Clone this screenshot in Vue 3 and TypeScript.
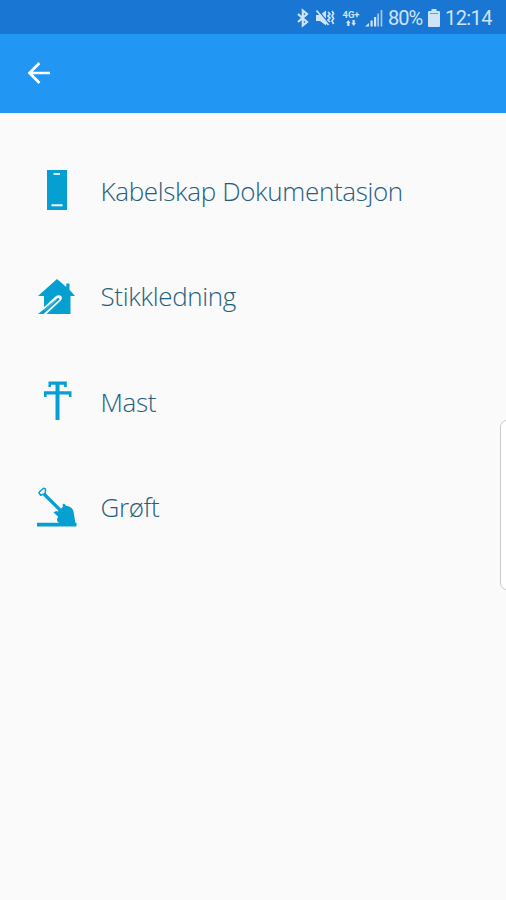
<script setup lang="ts">
type IconName = 'cabinet' | 'house' | 'mast' | 'shovel'

interface MenuItem {
  label: string
  icon: IconName
}

const items: MenuItem[] = [
  { label: 'Kabelskap Dokumentasjon', icon: 'cabinet' },
  { label: 'Stikkledning', icon: 'house' },
  { label: 'Mast', icon: 'mast' },
  { label: 'Grøft', icon: 'shovel' },
]
</script>

<template>
  <div class="screen">
    <div class="status">
      <svg class="bluetooth" width="14" height="20" viewBox="0 0 14 20">
        <path d="M2 6 11 14 6.800 17.500V2.500L11 6 2 14" fill="none" stroke="currentColor" stroke-width="2.200" />
      </svg>
      <svg class="mute" width="20" height="20" viewBox="0 0 20 20">
        <path d="M1 7h4l6-4.500v15L5 13H1z" fill="currentColor" />
        <path d="M2.500 1.500 14 15.500" stroke="#1976d2" stroke-width="1.300" />
        <path d="M1.500 2.500 13.500 17" stroke="currentColor" stroke-width="1.800" />
        <path d="M13 4l2 2-2 2 2 2-2 2 2 2M17 3l1.600 2.500L17 8l1.600 2.500L17 13l1.600 3" fill="none" stroke="currentColor" stroke-width="1.700" />
      </svg>
      <div class="network">
        <span>4G+</span>
        <svg width="10" height="6" viewBox="0 0 10 6">
          <path d="M0 3 2.300 0 4.600 3H3.500v3H1.200V3zM5.400 3h1.100V0h2.300v3h1.200L7.700 6z" fill="currentColor" />
        </svg>
      </div>
      <svg class="signal" width="18" height="18" viewBox="0 0 18 18">
        <path d="M0 17.500 4 14v3.500zM5.500 11.500h2.200v6H5.500zM9 8h2.200v9.500H9z" fill="currentColor" />
        <path d="M12.300 4.500h1.700v13h-1.700zM15.600 1h1.700v16.500h-1.700z" fill="currentColor" opacity=".75" />
      </svg>
      <span class="percent">80%</span>
      <svg class="battery" width="12" height="18" viewBox="0 0 12 18">
        <path d="M3.500 0h5v2H11q1 0 1 1v14q0 1-1 1H1q-1 0-1-1V3q0-1 1-1h2.500z" fill="currentColor" />
        <path d="M2 4.500h8" stroke="#5c9fe2" stroke-width="1" />
      </svg>
      <span class="clock">12:14</span>
    </div>

    <header class="bar">
      <svg class="back" width="24" height="24" viewBox="0 0 24 24">
        <path d="M23 12H3M12.500 2 2.500 12l10 10" fill="none" stroke="#fff" stroke-width="2.700" />
      </svg>
    </header>

    <main class="list">
      <div v-for="item in items" :key="item.label" class="row">
        <svg class="icon" width="44" height="44" viewBox="0 0 44 44">
          <template v-if="item.icon === 'cabinet'">
            <path d="M12 2h20v40H12z" fill="currentColor" />
            <path d="M18.500 6h6.500" stroke="#d7f1f9" stroke-width="2" />
            <path d="M16.500 37.300h11" stroke="#fff" stroke-width="2" />
          </template>
          <template v-else-if="item.icon === 'house'">
            <path d="M22 5 31.300 13V9.500h3.200v6.300L40 22h-4.500v18H9V22H3z" fill="currentColor" />
            <path d="M0 41.500 20.500 22.500q2.500-2.300 5.500-.7 2 2.500-.5 4.900L11 40.500V43H0z" fill="#fafafa" />
            <path d="M3 40 22.500 24.200q2-.7 2 1.200L8.500 40z" fill="currentColor" />
            <path d="M9 36.500 21.500 26" stroke="#75c9e5" stroke-width=".700" />
          </template>
          <path
            v-else-if="item.icon === 'mast'"
            d="M13.500 2.500h18.300v5.500h-2.700V5.800h-4.600v6.500h12V18h-2.600v-2.500h-9.400V41h-4V15.500h-8.900V18H9v-5.700h11.500V5.800H16V8h-2.500z"
            fill="currentColor"
          />
          <template v-else>
            <path d="M2 37.800h39.500v3.700H2z" fill="currentColor" />
            <path d="M9 9 25 25" stroke="currentColor" stroke-width="3.200" />
            <path d="M3.800 7.500 8.500 3.200l2 .7-.3 4.500-4.500 1.800z" fill="#fafafa" stroke="currentColor" stroke-width="1.500" stroke-linejoin="round" />
            <path d="M18.500 27.500l2.500-1.500 2 .5 5-5-.5-2 1.500-1 2.500 2.500q5.500.3 7 5.500l2 12H25.500q-4-1.500-3.500-4l1-3z" fill="currentColor" />
          </template>
        </svg>
        <span class="label">{{ item.label }}</span>
      </div>
    </main>

    <div class="edge-handle"></div>
  </div>
</template>

<style>
body {
  margin: 0;
}
</style>

<style scoped>
.screen {
  position: relative;
  width: 506px;
  height: 900px;
  overflow: hidden;
  background: #fafafa;
  font-family: 'Open Sans', sans-serif;
}

.status {
  box-sizing: border-box;
  display: flex;
  align-items: center;
  height: 34px;
  padding: 2px 0 0 296px;
  background: #1976d2;
  color: #d0e4f7;
  font-family: Roboto, sans-serif;
  font-size: 20px;
  line-height: 24px;
  white-space: nowrap;
}

.status svg {
  flex: none;
}

.mute {
  margin-left: 5px;
}

.network {
  display: flex;
  flex-direction: column;
  align-items: center;
  width: 18px;
  margin-left: 7px;
}

.network span {
  font-size: 9.5px;
  font-weight: 700;
  line-height: 10px;
}

.signal {
  margin-left: 5px;
}

.percent {
  width: 34px;
  margin-left: 5px;
  letter-spacing: -1px;
}

.battery {
  margin-left: 6px;
}

.clock {
  margin-left: 5px;
  letter-spacing: -0.6px;
}

.bar {
  box-sizing: border-box;
  display: flex;
  align-items: center;
  height: 79px;
  padding: 0 0 2px 27px;
  background: #2196f3;
}

.list {
  display: grid;
  grid-auto-rows: 105.5px;
  padding-top: 24.25px;
}

.row {
  display: flex;
  align-items: center;
  gap: 21.500px;
  padding-left: 35px;
}

.icon {
  flex: none;
  color: #059fd1;
}

.label {
  padding-top: 1px;
  color: #1f607e;
  font-size: 26px;
  font-weight: 300;
  letter-spacing: -0.35px;
  line-height: 36px;
  white-space: nowrap;
}

.edge-handle {
  position: absolute;
  top: 420px;
  right: -10px;
  box-sizing: border-box;
  width: 16px;
  height: 170px;
  border: 1.5px solid #cbcbcb;
  border-radius: 7px;
  background: #fff;
}
</style>
